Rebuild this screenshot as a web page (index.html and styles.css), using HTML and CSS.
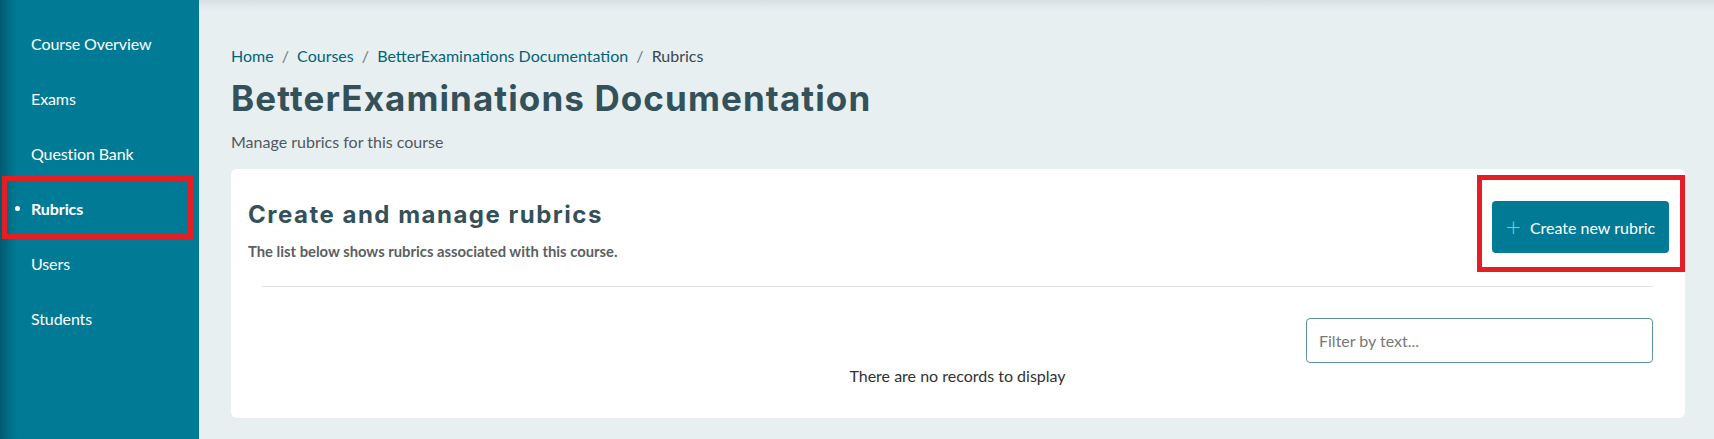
FILE: index.html
```html
<!DOCTYPE html>
<html lang="en">
<head>
  <meta charset="UTF-8" />
  <meta name="viewport" content="width=device-width, initial-scale=1" />
  <title>Rubrics - BetterExaminations Documentation</title>
  <link rel="stylesheet" href="styles.css">
</head>
<body>

  <aside class="sidebar">
    <ul class="nav">
      <li><a href="#">Course Overview</a></li>
      <li><a href="#">Exams</a></li>
      <li><a href="#">Question Bank</a></li>
      <li class="active marked"><a href="#">Rubrics</a></li>
      <li><a href="#">Users</a></li>
      <li><a href="#">Students</a></li>
    </ul>
  </aside>

  <main class="content">
    <nav class="breadcrumb">
      <a href="#">Home</a>
      <span class="sep">/</span>
      <a href="#">Courses</a>
      <span class="sep">/</span>
      <a href="#">BetterExaminations Documentation</a>
      <span class="sep">/</span>
      <span class="current">Rubrics</span>
    </nav>
    <h1 class="page-title">BetterExaminations Documentation</h1>
    <p class="page-sub">Manage rubrics for this course</p>

    <section class="card">
      <div class="card-head">
        <div>
          <h2 class="card-title">Create and manage rubrics</h2>
          <p class="card-desc">The list below shows rubrics associated with this course.</p>
        </div>
        <button class="btn-create marked">
          <span class="plus">+</span>
          Create new rubric
        </button>
      </div>

      <div class="table-area">
        <div class="filter-row">
          <input class="filter" type="text" placeholder="Filter by text...">
        </div>
        <p class="empty">There are no records to display</p>
      </div>
    </section>
  </main>

</body>
</html>
```

FILE: styles.css
```css
body {
  margin: 0;
  height: 100vh;
  display: flex;
  font-family: Lato, "Open Sans", sans-serif;
  background: #e8eff1;
  overflow: hidden;
}

/* sidebar */
.sidebar {
  width: 199px;
  flex-shrink: 0;
  background: linear-gradient(90deg, #005a6e 0px, #006e87 9px, #017b95 18px, #017b95 100%);
}

.nav {
  list-style: none;
  margin: 0;
  padding: 16px 0 0;
}

.nav li {
  height: 55px;
  display: flex;
  align-items: center;
  padding-left: 31px;
  position: relative;
}

.nav a {
  color: #ffffff;
  text-decoration: none;
  font-size: 16px;
  letter-spacing: -0.1px;
}

.nav li.active a {
  font-weight: 700;
}

.nav li.active::before {
  content: "";
  position: absolute;
  left: 15px;
  width: 5px;
  height: 5px;
  border-radius: 50%;
  background: #ffffff;
}

/* red annotation boxes */
.marked::after {
  content: "";
  position: absolute;
  border: 5px solid #e31e24;
  pointer-events: none;
}

.nav li.marked::after {
  top: -5px;
  bottom: -3px;
  left: 2px;
  right: 6px;
}

/* main */
.content {
  flex: 1;
  padding: 44px 29px 0 32px;
  background: linear-gradient(180deg, #d6dfe2 0px, #e8eff1 10px);
}

.breadcrumb {
  font-size: 16px;
  line-height: 24px;
  color: #37474f;
}

.breadcrumb a {
  color: #00647a;
  text-decoration: none;
}

.breadcrumb .sep {
  color: #6c7a80;
  padding: 0 4px;
}

.page-title {
  margin: 8px 0 0;
  font-family: Inter, sans-serif;
  font-weight: 700;
  font-size: 35px;
  line-height: 44px;
  letter-spacing: 1.1px;
  color: #34515a;
}

.page-sub {
  margin: 10px 0 0;
  font-size: 16px;
  line-height: 24px;
  color: #50595d;
}

.card {
  margin-top: 15px;
  background: #ffffff;
  border-radius: 6px;
  padding: 32px 16px 32px 17px;
}

.card-head {
  display: flex;
  justify-content: space-between;
  align-items: flex-start;
  padding-bottom: 25px;
}

.card-title {
  margin: 0;
  font-family: Inter, sans-serif;
  font-weight: 700;
  font-size: 24px;
  line-height: 28px;
  letter-spacing: 1.5px;
  color: #34515a;
}

.card-desc {
  margin: 12px 0 0;
  font-size: 14.8px;
  line-height: 20px;
  font-weight: 700;
  color: #5a5f62;
}

.btn-create {
  position: relative;
  width: 177px;
  height: 52px;
  border: none;
  border-radius: 4px;
  background: #017b95;
  color: #ffffff;
  font-family: Lato, sans-serif;
  font-size: 16px;
  display: flex;
  align-items: center;
  justify-content: center;
  gap: 9px;
  cursor: pointer;
}

.btn-create .plus {
  color: rgba(255, 255, 255, 0.55);
  font-size: 26px;
  font-weight: 300;
  line-height: 1;
  margin-top: -3px;
}

.btn-create.marked::after {
  top: -26px;
  bottom: -19px;
  left: -15px;
  right: -16px;
}

.table-area {
  margin: 0 16px 0 14px;
  border-top: 1px solid #e1e3e4;
  padding-top: 31px;
}

.filter-row {
  display: flex;
  justify-content: flex-end;
}

.filter {
  width: 347px;
  height: 45px;
  box-sizing: border-box;
  border: 1px solid #5f9399;
  border-radius: 4px;
  padding: 0 12px;
  font-family: Lato, sans-serif;
  font-size: 16px;
  color: #333;
}

.filter::placeholder {
  color: #787878;
}

.empty {
  margin: 3px 0 0;
  text-align: center;
  font-size: 16px;
  line-height: 20px;
  color: #2f3336;
}
```
